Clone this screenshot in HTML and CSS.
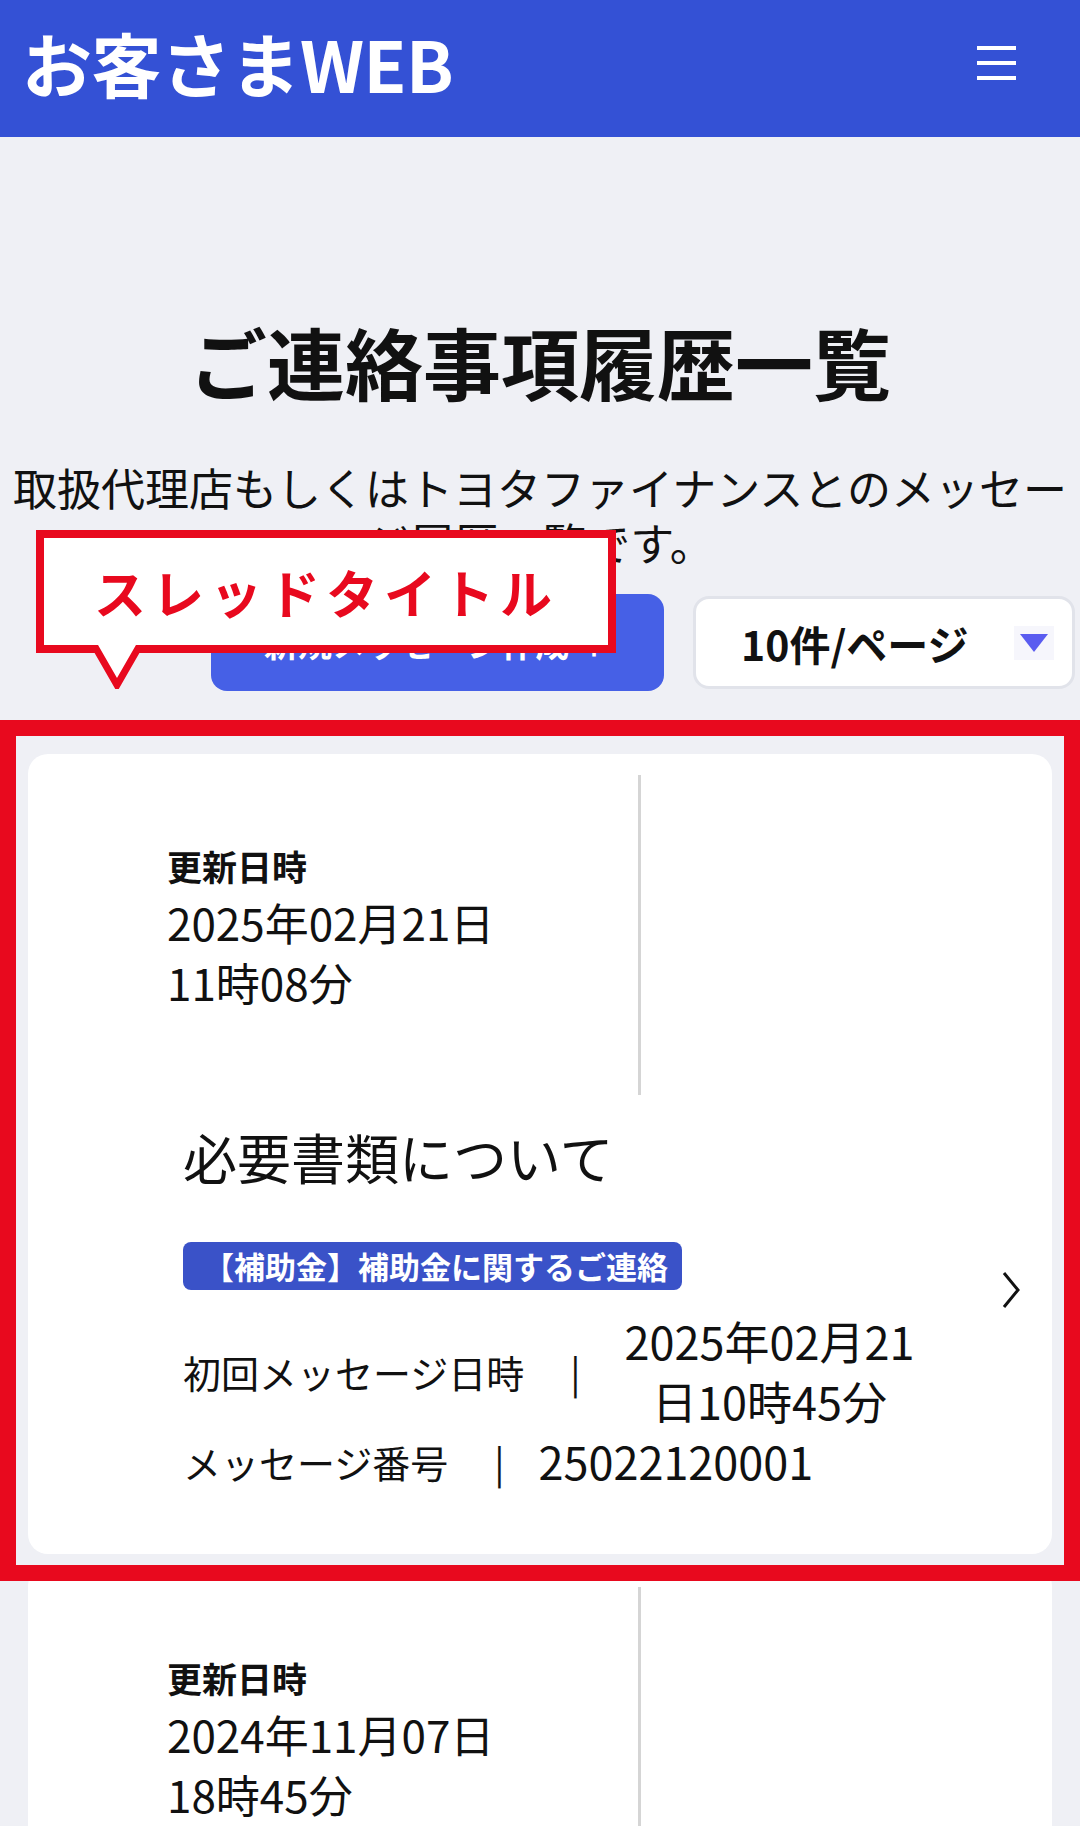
FILE: index.html
```
<!DOCTYPE html>
<html lang="ja">

<head>
    <meta charset="UTF-8">
    <meta name="viewport" content="width=device-width, initial-scale=1.0">
    <title>ご連絡事項履歴一覧 | お客さまWEB</title>
    <link rel="stylesheet" href="styles.css">
</head>

<body>
    <header class="site-header">
        <div class="logo">お客さまWEB</div>
        <button class="menu-btn" type="button" aria-label="メニュー">
            <span></span><span></span><span></span>
        </button>
    </header>

    <main>
        <h1 class="page-title">ご連絡事項履歴一覧</h1>
        <p class="page-lead">取扱代理店もしくはトヨタファイナンスとのメッセージ履歴一覧です。</p>

        <div class="toolbar">
            <button class="btn-new" type="button">新規メッセージ作成 ＋</button>
            <div class="per-page">
                <span>10件/ページ</span>
                <span class="caret">
                    <svg width="28" height="18" viewBox="0 0 28 18"><path d="M0 0 H28 L14 18 Z" fill="#5a5cf0"/></svg>
                </span>
            </div>

            <!-- annotation -->
            <div class="callout">
                スレッドタイトル
                <svg class="callout-tail" width="52" height="44" viewBox="0 0 52 44">
                    <path d="M3 0 L26 40 L49 0" fill="#fff" stroke="#e8091e" stroke-width="7"/>
                </svg>
            </div>
        </div>

        <ul class="thread-list">
            <li class="thread is-marked">
                <div class="thread-head">
                    <div class="updated">
                        <div class="updated-label">更新日時</div>
                        <div class="updated-date">2025年02月21日</div>
                        <div class="updated-date">11時08分</div>
                    </div>
                </div>
                <div class="thread-body">
                    <div class="thread-main">
                        <h2 class="thread-title">必要書類について</h2>
                        <span class="thread-tag">【補助金】補助金に関するご連絡</span>
                        <div class="meta">
                            <div class="meta-row">
                                <span>初回メッセージ日時</span>
                                <span class="meta-sep">|</span>
                                <span class="meta-value">2025年02月21日10時45分</span>
                            </div>
                            <div class="meta-row">
                                <span>メッセージ番号</span>
                                <span class="meta-sep">|</span>
                                <span class="meta-value">25022120001</span>
                            </div>
                        </div>
                    </div>
                    <svg class="thread-arrow" width="20" height="38" viewBox="0 0 20 38">
                        <path d="M3 2 L17 19 L3 36" fill="none" stroke="#111" stroke-width="3"/>
                    </svg>
                </div>
            </li>
            <li class="thread">
                <div class="thread-head">
                    <div class="updated">
                        <div class="updated-label">更新日時</div>
                        <div class="updated-date">2024年11月07日</div>
                        <div class="updated-date">18時45分</div>
                    </div>
                </div>
            </li>
        </ul>
    </main>
</body>

</html>
```

FILE: styles.css
```
* {
    box-sizing: border-box;
}

body {
    margin: 0;
    background-color: #eff0f5;
    font-family: "Noto Sans CJK JP", "Noto Sans", sans-serif;
    color: #111;
}

.site-header {
    height: 137px;
    background-color: #3451d5;
    display: flex;
    align-items: center;
    justify-content: space-between;
    padding: 0 64px 12px 22px;
}

.logo {
    color: #fff;
    font-size: 70px;
    font-weight: 700;
    letter-spacing: -0.5px;
}

.menu-btn {
    width: 39px;
    display: flex;
    flex-direction: column;
    gap: 11px;
    background: none;
    border: 0;
    padding: 0;
}

.menu-btn span {
    display: block;
    height: 4px;
    background-color: #fff;
}

.page-title {
    margin: 177px 0 0;
    text-align: center;
    font-size: 78px;
    line-height: 94px;
    font-weight: 700;
}

.page-lead {
    margin: 52px 8px 0;
    text-align: center;
    font-size: 44px;
    line-height: 55px;
}

.toolbar {
    position: relative;
    margin-top: 24px;
    display: flex;
    justify-content: flex-end;
    align-items: center;
    gap: 29px;
    padding-right: 5px;
}

.btn-new {
    width: 453px;
    height: 97px;
    border: 0;
    border-radius: 16px;
    background-color: #4660e6;
    color: #fff;
    font-family: inherit;
    font-size: 34px;
    font-weight: 700;
}

.per-page {
    width: 382px;
    height: 93px;
    background-color: #fff;
    border: 3px solid #e1e3ea;
    border-radius: 16px;
    display: flex;
    align-items: center;
    justify-content: space-between;
    padding: 0 18px 0 45px;
    font-size: 41px;
    font-weight: 700;
}

.caret {
    width: 40px;
    height: 34px;
    background-color: #f6f6fc;
    display: flex;
    align-items: center;
    justify-content: center;
}

.callout {
    position: absolute;
    left: 36px;
    top: -64px;
    width: 580px;
    height: 123px;
    border: 8px solid #e8091e;
    background-color: #fff;
    color: #e8091e;
    font-size: 52px;
    font-weight: 700;
    letter-spacing: 6px;
    display: flex;
    align-items: center;
    justify-content: center;
}

.callout-tail {
    position: absolute;
    left: 47px;
    top: 100%;
}

.thread-list {
    list-style: none;
    margin: 63px 0 0;
    padding: 0 28px;
    display: flex;
    flex-direction: column;
    gap: 12px;
}

.thread {
    position: relative;
    background-color: #fff;
    border-radius: 20px;
}

.thread.is-marked {
    z-index: 1;
}

.thread.is-marked::after {
    content: "";
    position: absolute;
    top: -34px;
    left: -28px;
    right: -28px;
    bottom: -27px;
    border: 16px solid #e8091e;
    pointer-events: none;
}

.thread-head {
    padding-top: 21px;
    display: flex;
}

.updated {
    width: 613px;
    height: 320px;
    border-right: 3px solid #d5d5d5;
    display: flex;
    flex-direction: column;
    justify-content: center;
    padding: 0 0 18px 139px;
}

.updated-label {
    font-size: 35px;
    font-weight: 700;
    line-height: 52px;
}

.updated-date {
    font-size: 44px;
    line-height: 60px;
}

.thread-body {
    display: flex;
    align-items: center;
    padding: 24px 31px 63px 155px;
}

.thread-main {
    flex: 1;
}

.thread-title {
    margin: 0;
    font-size: 54px;
    line-height: 76px;
    font-weight: 400;
}

.thread-tag {
    display: inline-block;
    margin-top: 47px;
    background-color: #3a52c8;
    color: #fff;
    font-size: 31px;
    font-weight: 700;
    line-height: 48px;
    padding: 0 14px 0 20px;
    border-radius: 8px;
}

.meta {
    margin-top: 21px;
}

.meta-row {
    display: flex;
    align-items: center;
    font-size: 38px;
}

.meta-sep {
    margin: 0 34px 0 46px;
}

.meta-value {
    max-width: 310px;
    text-align: center;
    font-size: 45px;
    line-height: 60px;
}

.thread-arrow {
    margin-bottom: 30px;
}
```
